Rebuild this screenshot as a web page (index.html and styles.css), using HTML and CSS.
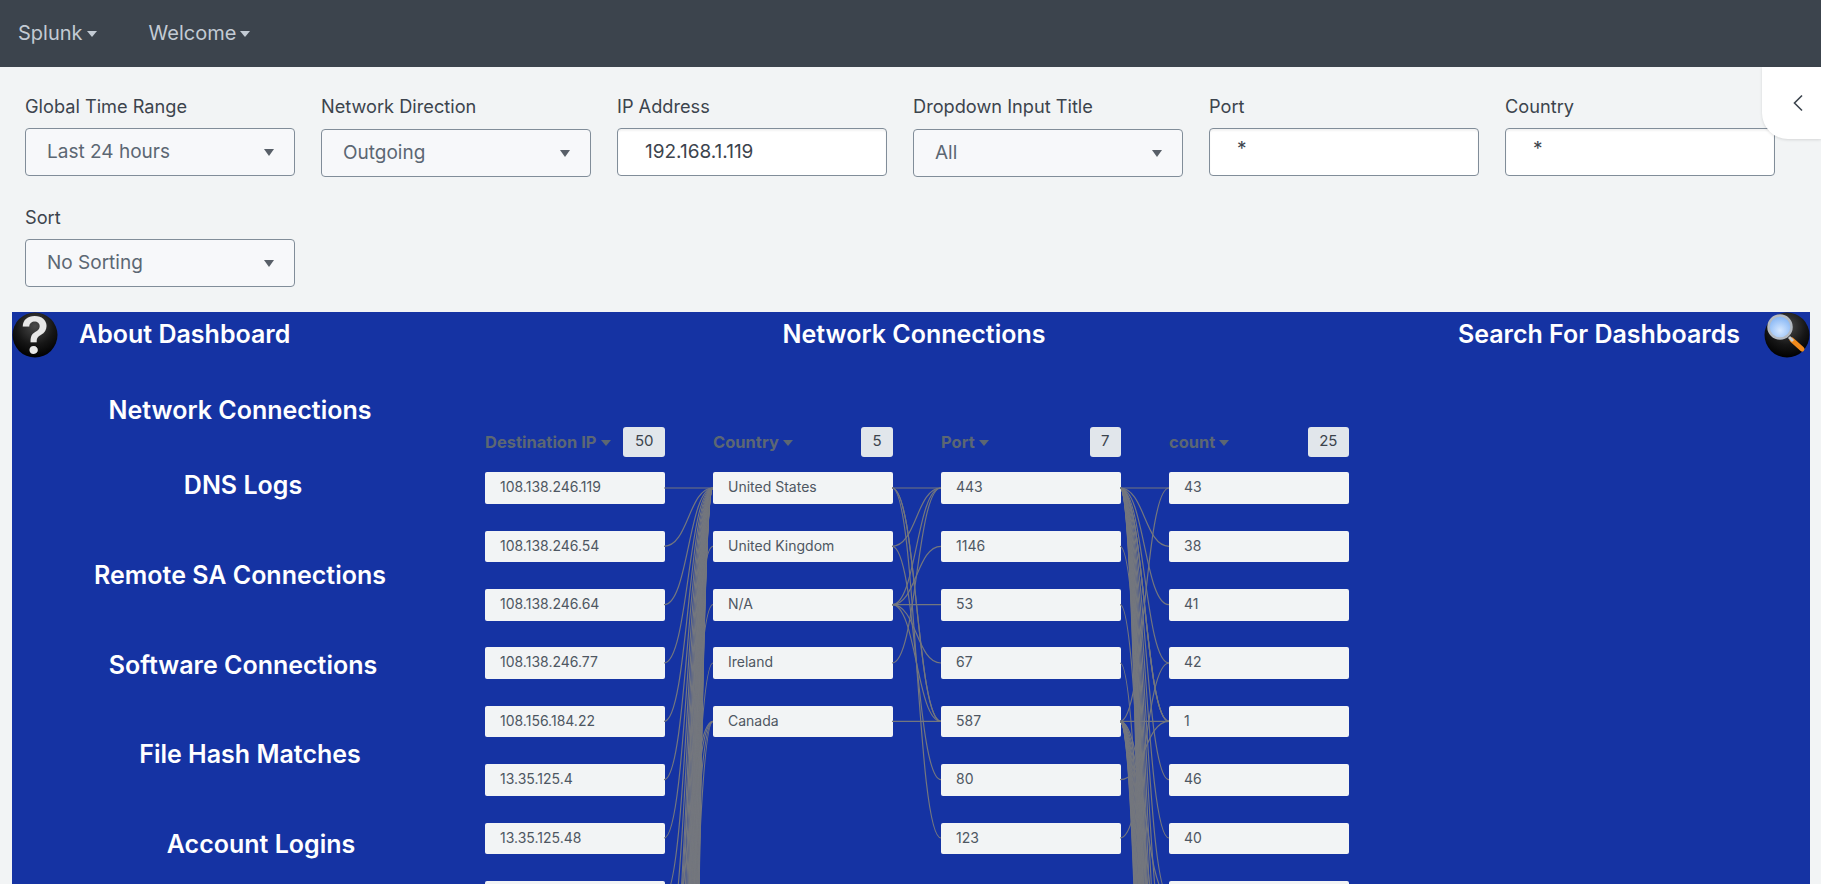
FILE: index.html
```html
<!DOCTYPE html>
<html lang="en">
<head>
  <meta charset="UTF-8" />
  <meta name="viewport" content="width=device-width, initial-scale=1" />
  <title>Network Connections</title>
  <link rel="stylesheet" href="styles.css">
</head>
<body>
  <nav class="topbar">
    <span class="topbar-item">Splunk<i class="caret"></i></span>
    <span class="topbar-item">Welcome<i class="caret"></i></span>
  </nav>

  <!-- Filtres -->
  <section class="filters">
    <div class="filter">
      <label>Global Time Range</label>
      <div class="field select">Last 24 hours<i class="caret"></i></div>
    </div>
    <div class="filter shifted">
      <label>Network Direction</label>
      <div class="field select">Outgoing<i class="caret"></i></div>
    </div>
    <div class="filter">
      <label>IP Address</label>
      <div class="field text">192.168.1.119</div>
    </div>
    <div class="filter shifted">
      <label>Dropdown Input Title</label>
      <div class="field select">All<i class="caret"></i></div>
    </div>
    <div class="filter">
      <label>Port</label>
      <div class="field text star">*</div>
    </div>
    <div class="filter">
      <label>Country</label>
      <div class="field text star">*</div>
    </div>
    <div class="filter">
      <label>Sort</label>
      <div class="field select">No Sorting<i class="caret"></i></div>
    </div>
  </section>

  <div class="collapse-tab">
    <svg width="12" height="18" viewBox="0 0 12 18"><path d="M10 1.5 2.5 9l7.5 7.5" fill="none" stroke="#3c444d" stroke-width="1.6"/></svg>
  </div>

  <main class="panel">
    <header class="panel-head">
      <div class="panel-link">
        <svg class="orb" viewBox="0 0 46 46">
          <defs>
            <radialGradient id="orbFill" cx="50%" cy="30%" r="70%">
              <stop offset="0" stop-color="#4a4a4a"/>
              <stop offset="0.6" stop-color="#161616"/>
              <stop offset="1" stop-color="#000"/>
            </radialGradient>
          </defs>
          <circle cx="23" cy="23" r="22.5" fill="url(#orbFill)"/>
          <text x="23" y="42" text-anchor="middle" class="orb-mark">?</text>
        </svg>
        <span>About Dashboard</span>
      </div>
      <div class="panel-title">Network Connections</div>
      <div class="panel-link right">
        <span>Search For Dashboards</span>
        <svg class="orb" viewBox="0 0 46 46">
          <defs>
            <radialGradient id="lensFill" cx="50%" cy="65%" r="60%">
              <stop offset="0" stop-color="#d6e8ff"/>
              <stop offset="1" stop-color="#86b6f5"/>
            </radialGradient>
          </defs>
          <circle cx="23" cy="23" r="22.5" fill="url(#orbFill)"/>
          <path d="M28 28 38 37" stroke="#f08a1c" stroke-width="5" stroke-linecap="round"/>
          <path d="M25 25 29 29" stroke="#c9ccd0" stroke-width="3"/>
          <circle cx="16" cy="15" r="11.5" fill="url(#lensFill)" stroke="#b4bac2" stroke-width="2.5"/>
        </svg>
      </div>
    </header>

    <div class="panel-body">
      <ul class="dash-nav">
        <li>Network Connections</li>
        <li class="in-1">DNS Logs</li>
        <li>Remote SA Connections</li>
        <li class="in-1">Software Connections</li>
        <li class="in-2">File Hash Matches</li>
        <li class="in-3">Account Logins</li>
      </ul>

      <div class="sets">
        <svg class="links" id="links" width="864" height="527"></svg>

        <div class="set">
          <div class="set-head"><span class="set-name">Destination IP<i class="caret"></i></span><span class="badge">50</span></div>
          <div class="nodes">
            <div class="node">108.138.246.119</div>
            <div class="node">108.138.246.54</div>
            <div class="node">108.138.246.64</div>
            <div class="node">108.138.246.77</div>
            <div class="node">108.156.184.22</div>
            <div class="node">13.35.125.4</div>
            <div class="node">13.35.125.48</div>
            <div class="node"></div>
          </div>
        </div>

        <div class="set">
          <div class="set-head"><span class="set-name">Country<i class="caret"></i></span><span class="badge">5</span></div>
          <div class="nodes">
            <div class="node">United States</div>
            <div class="node">United Kingdom</div>
            <div class="node">N/A</div>
            <div class="node">Ireland</div>
            <div class="node">Canada</div>
          </div>
        </div>

        <div class="set">
          <div class="set-head"><span class="set-name">Port<i class="caret"></i></span><span class="badge">7</span></div>
          <div class="nodes">
            <div class="node">443</div>
            <div class="node">1146</div>
            <div class="node">53</div>
            <div class="node">67</div>
            <div class="node">587</div>
            <div class="node">80</div>
            <div class="node">123</div>
          </div>
        </div>

        <div class="set">
          <div class="set-head"><span class="set-name">count<i class="caret"></i></span><span class="badge">25</span></div>
          <div class="nodes">
            <div class="node">43</div>
            <div class="node">38</div>
            <div class="node">41</div>
            <div class="node">42</div>
            <div class="node">1</div>
            <div class="node">46</div>
            <div class="node">40</div>
            <div class="node"></div>
          </div>
        </div>
      </div>
    </div>
  </main>

  <script src="links.js"></script>
</body>
</html>
```

FILE: styles.css
```css
html, body {
  margin: 0;
  height: 100%;
  overflow: hidden;
}
body {
  font-family: Inter, "Open Sans", sans-serif;
  background: #f2f4f5;
  color: #3c444d;
  display: flex;
  flex-direction: column;
  position: relative;
}
.caret {
  display: inline-block;
  width: 0;
  height: 0;
  border-left: 5.5px solid transparent;
  border-right: 5.5px solid transparent;
  border-top: 6px solid currentColor;
}

.topbar {
  height: 67px;
  flex: none;
  background: #3c444d;
  color: #c3cbd4;
  display: flex;
  align-items: center;
  gap: 52px;
  padding: 0 0 1px 18px;
  box-sizing: border-box;
  font-size: 20px;
}
.topbar-item .caret {
  margin-left: 4px;
  vertical-align: 3px;
}

.filters {
  height: 245px;
  flex: none;
  box-sizing: border-box;
  padding: 28px 0 0 25px;
  display: flex;
  flex-wrap: wrap;
  align-content: flex-start;
  column-gap: 26px;
  row-gap: 29px;
}
.filter {
  width: 270px;
}
.filter label {
  display: block;
  height: 22px;
  line-height: 23px;
  font-size: 18.2px;
  margin-bottom: 11px;
}
.filter.shifted label {
  margin-bottom: 12px;
}
.field {
  box-sizing: border-box;
  height: 48px;
  border: 1px solid #818d99;
  border-radius: 4px;
  font-size: 19px;
  line-height: 45px;
  padding-left: 21px;
  position: relative;
}
.field.select {
  background: #f7f8fa;
  color: #5c6773;
}
.field.select .caret {
  position: absolute;
  right: 20px;
  top: 20px;
  border-top-width: 7px;
  color: #3c444d;
  opacity: 0.85;
}
.field.text {
  background: #fff;
  box-shadow: inset 0 2px 2px rgba(0, 0, 0, 0.05);
  color: #3c444d;
  padding-left: 27px;
}
.field.star {
  line-height: 40px;
}

.collapse-tab {
  position: absolute;
  top: 67px;
  right: 0;
  width: 59px;
  height: 72px;
  background: #fff;
  border-bottom-left-radius: 26px;
  box-shadow: 0 1px 3px rgba(0, 0, 0, 0.12);
  display: flex;
  align-items: center;
  padding-left: 30px;
  box-sizing: border-box;
}

.panel {
  flex: 1;
  margin: 0 11px 0 12px;
  background: #1533a3;
  color: #fff;
  overflow: hidden;
}
.panel-head {
  height: 45px;
  display: grid;
  grid-template-columns: 1fr auto 1fr;
  align-items: center;
  font-size: 25px;
  font-weight: 600;
}
.panel-title {
  padding-left: 6px;
  margin-bottom: 2px;
}
.panel-link {
  display: flex;
  align-items: center;
  gap: 21px;
}
.panel-link span {
  margin-bottom: 2px;
}
.panel-link.right {
  justify-content: flex-end;
  gap: 24px;
}
.orb {
  width: 46px;
  height: 46px;
  flex: none;
}
.orb-mark {
  font-size: 52px;
  font-weight: 600;
  fill: #e8e8e8;
}

.panel-body {
  display: flex;
}
.dash-nav {
  list-style: none;
  width: 456px;
  margin: 38px 17px 0 0;
  padding: 0;
  text-align: center;
  font-size: 25px;
  font-weight: 600;
  line-height: 30px;
}
.dash-nav li {
  margin-bottom: 60px;
}
.dash-nav li:first-child {
  margin-bottom: 45px;
}
.dash-nav li:nth-child(4) {
  margin-bottom: 59px;
}
.dash-nav li.in-1 {
  padding-left: 6px;
}
.dash-nav li.in-2 {
  padding-left: 20px;
}
.dash-nav li.in-3 {
  padding-left: 42px;
}

.sets {
  position: relative;
  display: flex;
  gap: 48px;
  padding-top: 70px;
}
.links {
  position: absolute;
  left: 0;
  top: 0;
}
.links path {
  fill: none;
  stroke: #74777e;
  stroke-width: 1.2;
}
.set {
  width: 180px;
}
.set-head {
  height: 30px;
  margin-bottom: 15.45px;
  display: flex;
  justify-content: space-between;
  align-items: center;
}
.set-name {
  font-size: 16.5px;
  font-weight: 700;
  color: #5c6773;
}
.set-name .caret {
  margin-left: 4px;
  vertical-align: 2px;
}
.badge {
  height: 30px;
  line-height: 28px;
  padding: 0 11.5px;
  background: #e1e6eb;
  border-radius: 3px;
  font-size: 15px;
  color: #3c444d;
}
.nodes {
  display: flex;
  flex-direction: column;
  gap: 26.85px;
}
.node {
  height: 31.5px;
  line-height: 29.5px;
  background: #f2f4f5;
  border-radius: 2px;
  padding-left: 15px;
  font-size: 14px;
  color: #4e5762;
}
```

FILE: links.js
```js
// Liens entre colonnes : [ligne de gauche, ligne de droite]
const ROW = 58.33;
const TOP = 131;
const COL = 228;

function range(a, b) {
  const out = [];
  for (let i = a; i <= b; i++) out.push(i);
  return out;
}

// Destination IP -> Country
const ipLinks = range(0, 49).map(i => [i, 0]);
[[9, 1], [12, 2], [16, 3], [8, 4], [10, 4], [14, 4], [20, 4]].forEach(l => ipLinks.push(l));

// Country -> Port
const countryLinks = [
  [0, 0], [0, 4], [0, 4], [0, 6],
  [1, 0], [1, 5],
  [2, 0], [2, 1], [2, 2], [2, 3], [2, 4],
  [3, 0],
  [4, 4]
];

// Port -> count
const portLinks = range(0, 24).map(i => [0, i]);
[[0, 4], [0, 4], [1, 11], [2, 13], [3, 15], [4, 0], [4, 4], [5, 4], [6, 3]].forEach(l => portLinks.push(l));
range(7, 24).forEach(i => portLinks.push([4, i]));

function draw(links, col) {
  const x0 = COL * col + 179;
  const x1 = COL * col + 228;
  const mid = (x0 + x1) / 2;
  return links.map(([a, b]) => {
    const y0 = TOP + a * ROW;
    const y1 = TOP + b * ROW;
    return `<path d="M${x0} ${y0}C${mid} ${y0} ${mid} ${y1} ${x1} ${y1}"/>`;
  }).join("");
}

document.getElementById("links").innerHTML =
  draw(ipLinks, 0) + draw(countryLinks, 1) + draw(portLinks, 2);
```
